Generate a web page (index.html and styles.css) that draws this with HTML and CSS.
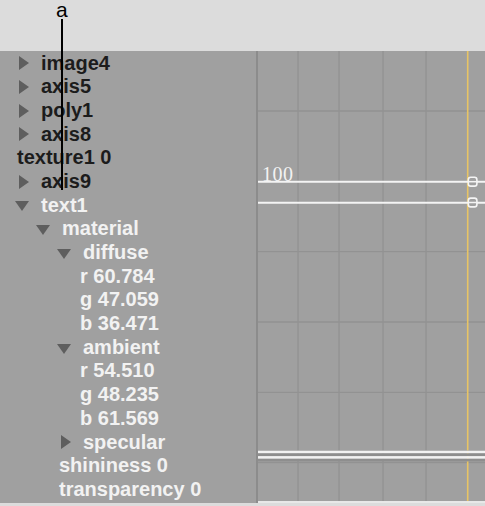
FILE: index.html
```html
<!DOCTYPE html>
<html lang="en">
<head>
  <meta charset="UTF-8">
  <title>Graph editor</title>
  <link rel="stylesheet" href="styles.css">
</head>
<body>
  <div class="screen">
    <div class="topbar"></div>

    <div class="main">
      <ul class="tree">
        <li class="row dark"><span class="tog closed"></span>image4</li>
        <li class="row dark"><span class="tog closed"></span>axis5</li>
        <li class="row dark"><span class="tog closed"></span>poly1</li>
        <li class="row dark"><span class="tog closed"></span>axis8</li>
        <li class="row dark leaf">texture1 0</li>
        <li class="row dark"><span class="tog closed"></span>axis9</li>
        <li class="row"><span class="tog open"></span>text1</li>
        <li class="row lv1"><span class="tog open"></span>material</li>
        <li class="row lv2"><span class="tog open"></span>diffuse</li>
        <li class="row lv3 leaf">r 60.784</li>
        <li class="row lv3 leaf">g 47.059</li>
        <li class="row lv3 leaf">b 36.471</li>
        <li class="row lv2"><span class="tog open"></span>ambient</li>
        <li class="row lv3 leaf">r 54.510</li>
        <li class="row lv3 leaf">g 48.235</li>
        <li class="row lv3 leaf">b 61.569</li>
        <li class="row lv2"><span class="tog closed"></span>specular</li>
        <li class="row lv2 leaf">shininess 0</li>
        <li class="row lv2 leaf">transparency 0</li>
      </ul>

      <div class="chart">
        <svg width="227" height="452" viewBox="0 0 227 452">
          <!-- grid -->
          <g stroke="#929292" stroke-width="1.3">
            <line x1="40" y1="0" x2="40" y2="450"/>
            <line x1="81" y1="0" x2="81" y2="450"/>
            <line x1="125" y1="0" x2="125" y2="450"/>
            <line x1="168" y1="0" x2="168" y2="450"/>
            <line x1="0" y1="60" x2="227" y2="60"/>
            <line x1="0" y1="130.3" x2="227" y2="130.3"/>
            <line x1="0" y1="200.7" x2="227" y2="200.7"/>
            <line x1="0" y1="271" x2="227" y2="271"/>
            <line x1="0" y1="341.3" x2="227" y2="341.3"/>
            <line x1="0" y1="411.7" x2="227" y2="411.7"/>
          </g>

          <!-- current time -->
          <line x1="209.7" y1="0" x2="209.7" y2="450" stroke="#e8c464" stroke-width="1.6"/>

          <!-- curves -->
          <text class="value" x="4" y="130">100</text>
          <line x1="0" y1="130.7" x2="227" y2="130.7" stroke="#f4f4f4" stroke-width="2"/>
          <line x1="0" y1="151.7" x2="227" y2="151.7" stroke="#f4f4f4" stroke-width="2"/>
          <rect x="210.3" y="126.3" width="8.6" height="8.8" rx="2.4" fill="#a0a0a0" stroke="#f4f4f4" stroke-width="1.6"/>
          <line x1="210.3" y1="130.7" x2="218.9" y2="130.7" stroke="#f4f4f4" stroke-width="1.5"/>
          <rect x="210.3" y="147.1" width="8.6" height="8.8" rx="2.4" fill="#a0a0a0" stroke="#f4f4f4" stroke-width="1.6"/>
          <line x1="210.3" y1="151.5" x2="218.9" y2="151.5" stroke="#f4f4f4" stroke-width="1.5"/>

          <!-- double curve near bottom -->
          <rect x="0" y="399.3" width="227" height="0.8" fill="#bdbdbd"/>
          <rect x="0" y="400" width="227" height="2.4" fill="#f2f2f2"/>
          <rect x="0" y="402.4" width="227" height="2.7" fill="#8e8e8e"/>
          <rect x="0" y="405.1" width="227" height="2.7" fill="#f2f2f2"/>
          <rect x="0" y="407.8" width="227" height="2.6" fill="#8e8e8e"/>

          <rect x="0" y="450" width="227" height="2" fill="#e8e8e8"/>
        </svg>
      </div>
    </div>

    <div class="footer"></div>

    <div class="pin">a</div>
    <div class="pin-line"></div>
  </div>
</body>
</html>
```

FILE: styles.css
```css
body { margin: 0; }
.screen { position: relative; width: 485px; height: 506px; background: #dcdcdc; overflow: hidden; }
.topbar { height: 51px; }
.main { display: flex; height: 452px; background: #a0a0a0; }
.footer { height: 3px; }

.tree { list-style: none; margin: 0; padding: 0.5px 0 0; width: 256px; font-family: "Liberation Sans", Arial, sans-serif; font-weight: bold; font-size: 20px; color: #f2f2f2; }
.row { display: flex; align-items: center; height: 23.7px; line-height: 23.7px; white-space: nowrap; }
.row.dark { color: #1c1c1c; }
.lv1 { padding-left: 21px; }
.lv2 { padding-left: 42px; }
.lv3 { padding-left: 63px; }
.leaf { text-indent: 17px; }

.tog { display: block; width: 0; height: 0; flex: none; }
.tog.closed { margin: 0 12px 0 19px; border-left: 10px solid #5e5e5e; border-top: 7px solid transparent; border-bottom: 7px solid transparent; }
.tog.open { margin: 2px 12px 0 15px; border-top: 10px solid #5e5e5e; border-left: 7px solid transparent; border-right: 7px solid transparent; }

.chart { border-left: 2px solid #8c8c8c; flex: 1; }
.chart svg { display: block; }
.value { font-family: "Liberation Serif", "Times New Roman", serif; font-size: 20px; fill: #f2f2f2; letter-spacing: 0.5px; }

.pin { position: absolute; left: 56px; top: 0; font-family: "Liberation Sans", Arial, sans-serif; font-size: 21px; line-height: 19px; color: #000; }
.pin-line { position: absolute; left: 61px; top: 19px; width: 2px; height: 171px; background: #000; }
```
